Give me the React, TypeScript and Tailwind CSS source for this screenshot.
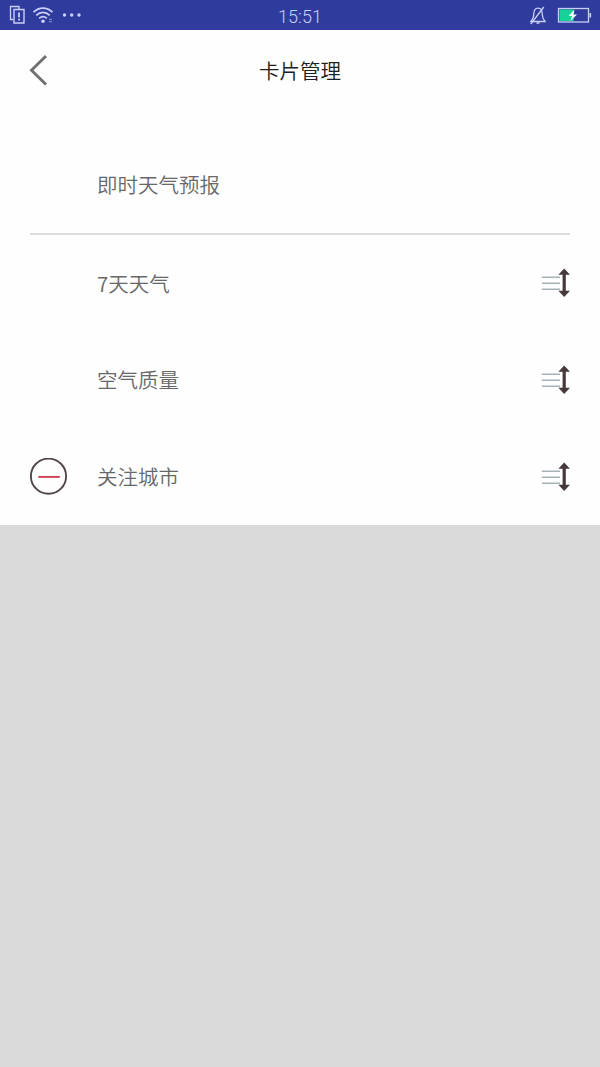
import React from 'react';

function StatusBar() {
  return (
    <header className="grid h-[30px] grid-cols-3 items-center bg-[#303c9d] text-[#c8cffa]">
      <div className="flex items-center">
        <svg width="90" height="30" viewBox="0 0 90 30" fill="none" stroke="currentColor">
          <path d="M13 19.500h-2.500v-13h8.500v2.500" strokeWidth="1.300" />
          <path d="M14 9.500h10v13.500h-10z" strokeWidth="1.400" />
          <path d="M19 12.500v5M19 18.800v1.800" strokeWidth="1.800" />
          <path d="M33.500 12.200c5.600-5.400 13.400-5.400 19 0M36.300 15.300c4-3.800 9.400-3.800 13.400 0M39.200 18.400c2.400-2.200 5.200-2.200 7.600 0" strokeWidth="1.800" />
          <circle cx="43" cy="21.300" r="1.800" fill="currentColor" stroke="none" />
          <path d="M49 19.300h3M49 21.700h3" strokeWidth="1.200" opacity="0.5" />
          <g fill="currentColor" stroke="none">
            <circle cx="64.500" cy="15" r="1.700" />
            <circle cx="71.700" cy="15" r="1.700" />
            <circle cx="79" cy="15" r="1.700" />
          </g>
        </svg>
      </div>
      <time className="pt-[3px] text-center font-['Roboto','Liberation_Sans',sans-serif] text-[18px] leading-none font-[350] tracking-[0.1px]">15:51</time>
      <div className="flex justify-end">
        <svg width="80" height="30" viewBox="0 0 80 30" fill="none" stroke="currentColor">
          <path d="M11 21.500c1.900-2.200 2.800-4.300 2.800-7.500 0-3.800 1.500-5.800 4.200-5.800s4.200 2 4.200 5.800c0 3.200.9 5.300 2.800 7.500z" strokeWidth="1.300" />
          <path d="M16.500 23h3M23.800 7L10.800 24" strokeWidth="1.300" />
          <rect x="38.500" y="8.500" width="30" height="13.500" strokeWidth="1.300" />
          <path d="M70.300 13v4.500" strokeWidth="1.600" />
          <path d="M39.500 9.500h14v11.500h-14z" fill="#16d296" stroke="none" />
          <path d="M54.500 9.500l-6 6.500h3.500l-1.500 5 6.500-6.500h-3.500z" fill="#f0fff9" stroke="none" />
        </svg>
      </div>
    </header>
  );
}

function DragHandle() {
  return (
    <svg width="30" height="30" viewBox="0 0 30 30" fill="none" aria-hidden="true">
      <path d="M1.800 9.200H20M1.800 15.200H20M1.800 21.200H20" stroke="#a5b3b7" strokeWidth="1.500" />
      <path d="M24.200 5v20" stroke="#44393b" strokeWidth="3.200" />
      <path d="M24.200.5l5.800 6.200h-11.600zM24.200 29l5.800-6.200h-11.600z" fill="#44393b" />
    </svg>
  );
}

function RemoveIcon() {
  return (
    <svg width="38" height="38" viewBox="0 0 38 38" fill="none" aria-hidden="true">
      <circle cx="18.500" cy="18.200" r="17.600" stroke="#51464a" strokeWidth="1.900" />
      <path d="M8.300 18.900h21.500" stroke="#cf4053" strokeWidth="1.900" />
    </svg>
  );
}

function CardRow({ label, removable = false }: { label: string; removable?: boolean }) {
  return (
    <li className="flex items-center px-[30px]">
      <div className="w-[67px] shrink-0">{removable && <RemoveIcon />}</div>
      <span className="flex-1 pb-px">{label}</span>
      <DragHandle />
    </li>
  );
}

export default function App() {
  return (
    <div className="min-h-[1067px] bg-[#dadada] font-['Noto_Sans_CJK_SC',sans-serif] text-[20.5px] leading-[30px] font-[350] text-[#686868]">
      <StatusBar />
      <main className="h-[495px] bg-[#fefefe]">
        <div className="grid h-20 grid-cols-[60px_1fr_60px] items-center">
          <svg className="ml-7" width="22" height="34" viewBox="0 0 22 34" fill="none" aria-hidden="true">
            <path d="M18 3L3.500 17.200 18 31.500" stroke="#707070" strokeWidth="2.900" />
          </svg>
          <h1 className="text-center font-[350] text-[#202020]">卡片管理</h1>
        </div>
        <div className="mx-[30px] flex h-[125px] items-center border-b-2 border-[#dedede] pt-[25px] pl-[67px]">即时天气预报</div>
        <ul className="grid h-[290px] grid-rows-3">
          <CardRow label="7天天气" />
          <CardRow label="空气质量" />
          <CardRow label="关注城市" removable />
        </ul>
      </main>
    </div>
  );
}
